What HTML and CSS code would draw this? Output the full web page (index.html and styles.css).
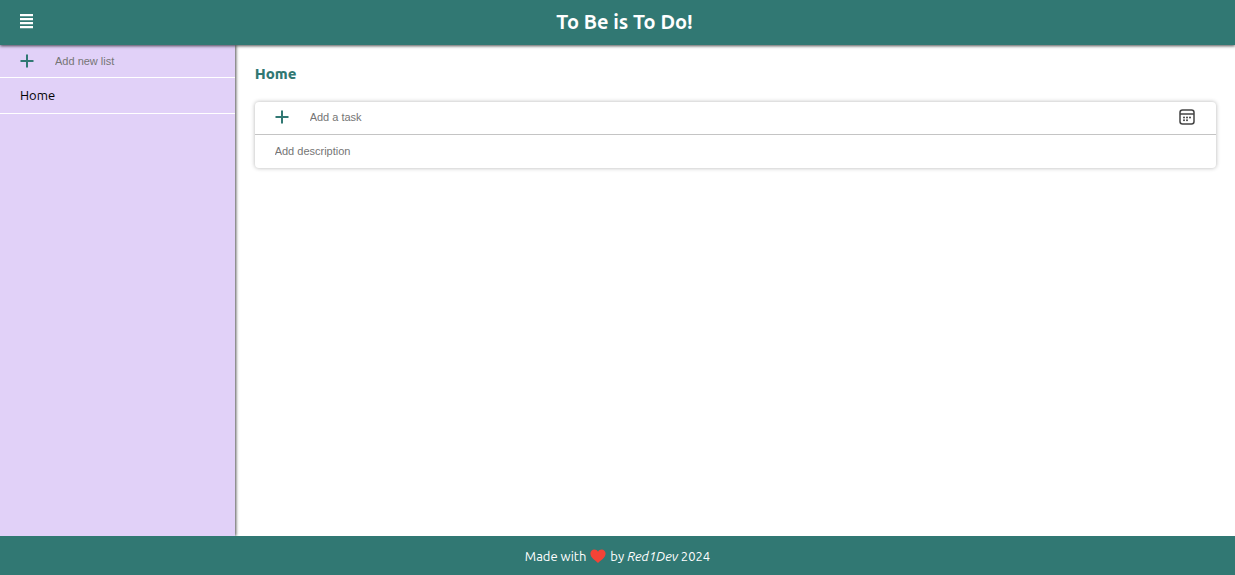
FILE: index.html
```
<!DOCTYPE html>
<html lang="en">
<head>
<meta charset="utf-8">
<meta name="viewport" content="width=device-width, initial-scale=1">
<title>To Be is To Do!</title>
<link rel="stylesheet" href="styles.css">
</head>
<body class="app">
<header class="header">
  <button class="icon-button" type="button" aria-label="Toggle lists">
    <svg width="14" height="16" viewBox="0 0 14 16" fill="currentColor" aria-hidden="true"><path d="M0 0h13v2.200H0zM0 4h13v2.200H0zM0 8h13v2.200H0zM0 12h13v2.200H0z"/></svg>
  </button>
  <h1 class="title">To Be is To Do!</h1>
</header>
<div class="content">
  <nav class="sidebar" aria-label="Lists">
    <form class="row list-form">
      <button class="icon-button add-button" type="button" aria-label="Add list">
        <svg width="15" height="15" viewBox="0 0 15 15" stroke="currentColor" stroke-width="2" aria-hidden="true"><path d="M7 .5v13M.5 7h13"/></svg>
      </button>
      <input class="field" type="text" aria-label="New list" placeholder="Add new list">
    </form>
    <a class="list-link" href="#home">Home</a>
  </nav>
  <main class="main">
    <h2 class="list-title">Home</h2>
    <form class="task-form">
      <div class="row task-row">
        <button class="icon-button add-button" type="button" aria-label="Add task">
          <svg width="15" height="15" viewBox="0 0 15 15" stroke="currentColor" stroke-width="2" aria-hidden="true"><path d="M7 .5v13M.5 7h13"/></svg>
        </button>
        <input class="field" type="text" aria-label="Task" placeholder="Add a task">
        <button class="icon-button date-button" type="button" aria-label="Due date">
          <svg width="17" height="16" viewBox="0 0 17 16" fill="none" stroke="currentColor" stroke-width="1.5" aria-hidden="true"><rect x="1" y="1" width="14" height="14" rx="2.500"/><path d="M1 5h14"/><g fill="currentColor" stroke="none"><circle cx="5" cy="8.500" r="1"/><circle cx="8" cy="8.500" r="1"/><circle cx="11" cy="8.500" r="1"/><circle cx="5" cy="11.300" r="1"/><circle cx="8" cy="11.300" r="1"/></g></svg>
        </button>
      </div>
      <div class="row description-row">
        <input class="field" type="text" aria-label="Description" placeholder="Add description">
      </div>
    </form>
  </main>
</div>
<footer class="footer">
  <p class="credit">Made with
    <svg class="heart" width="16" height="14" viewBox="0 0 16 14" role="img" aria-label="love"><path fill="#f44336" d="M8 14C5.500 11.800.4 8.700.4 4.600.4 2 2.200.4 4.300.4 6 .4 7.300 1.300 8 2.700 8.700 1.300 10 .4 11.700.4c2.100 0 3.900 1.600 3.900 4.200C15.600 8.700 10.500 11.800 8 14z"/></svg>
    by <em>Red1Dev</em> 2024</p>
</footer>
</body>
</html>
```
FILE: styles.css
```
* {
  box-sizing: border-box;
}

.app {
  display: flex;
  flex-direction: column;
  min-height: 100vh;
  margin: 0;
  background: #fff;
  color: #000;
  font-family: Ubuntu, "Noto Sans", sans-serif;
  font-size: 13px;
}

.header {
  display: flex;
  align-items: center;
  height: 45px;
  padding: 0 20px 2px;
  background: #317873;
  box-shadow: 0 1px 3px rgba(0, 0, 0, 0.7);
  color: #fff;
  z-index: 2;
}

.title {
  flex: 1;
  margin: 0;
  font-size: 20px;
  font-weight: 700;
  line-height: 24px;
  text-align: center;
}

.icon-button {
  display: flex;
  flex: none;
  padding: 0;
  border: 0;
  background: none;
  color: inherit;
  cursor: pointer;
}

.content {
  display: flex;
  flex: 1;
}

.sidebar {
  flex: 0 0 19%;
  background: #e1d1f8;
  box-shadow: 1px 0 3px rgba(0, 0, 0, 0.7);
}

.row {
  display: flex;
  align-items: center;
  gap: 20px;
  height: 33px;
  padding: 0 20px;
}

.list-form {
  border-bottom: 1px solid #fff;
}

.add-button {
  color: #317873;
}

.field {
  flex: 1;
  min-width: 0;
  padding: 0;
  border: 0;
  outline: 0;
  background: none;
  font-family: "Liberation Sans", Arial, sans-serif;
  font-size: 11px;
}

.field::placeholder {
  color: #757575;
}

.list-link {
  display: block;
  padding: 8px 20px;
  border-bottom: 1px solid #fff;
  color: #000;
  line-height: 19px;
  text-decoration: none;
}

.main {
  flex: 1;
  min-width: 0;
  padding: 19px 19px 19px 20px;
}

.list-title {
  margin: 0 0 18px;
  color: #317873;
  font-size: 15px;
  font-weight: 800;
  line-height: 20px;
}

.task-form {
  border-radius: 4px;
  box-shadow: 0 0 4px rgba(0, 0, 0, 0.3);
}

.task-row,
.description-row {
  padding-bottom: 2px;
}

.task-row {
  border-bottom: 1px solid #c4c4c4;
}

.date-button {
  color: #444;
}

.footer {
  display: flex;
  align-items: center;
  justify-content: center;
  height: 39px;
  background: #317873;
  color: #fff;
  z-index: 2;
}

.credit {
  margin: 0;
}

.heart {
  margin: 0 1px;
  vertical-align: -2px;
}
```
